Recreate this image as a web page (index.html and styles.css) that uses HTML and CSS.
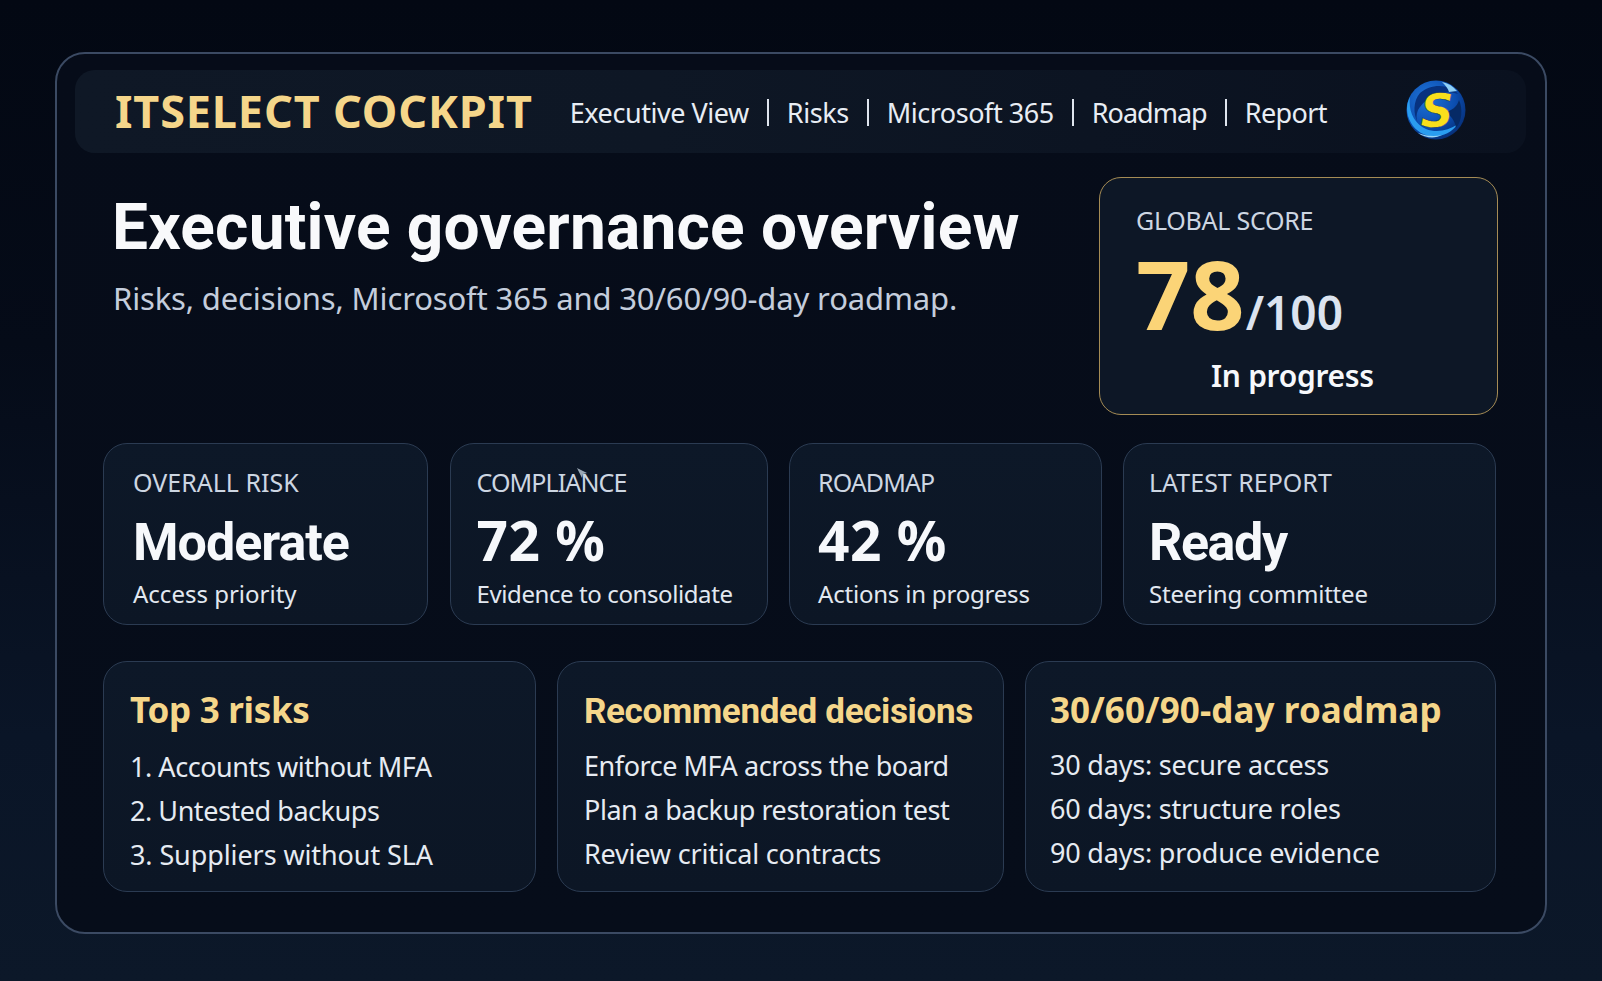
FILE: index.html
```html
<!DOCTYPE html>
<html lang="en">
<head>
<meta charset="utf-8">
<title>ITSELECT Cockpit</title>
<link rel="stylesheet" href="styles.css">
</head>
<body>
<main class="panel">
  <header class="topbar">
    <div class="brand">ITSELECT COCKPIT</div>
    <nav class="nav">
      <span>Executive View</span><i class="sep"></i>
      <span>Risks</span><i class="sep"></i>
      <span>Microsoft 365</span><i class="sep"></i>
      <span class="snug">Roadmap</span><i class="sep"></i>
      <span class="snug-less">Report</span>
    </nav>
    <svg class="logo" viewBox="0 0 60 60" aria-label="S logo">
      <defs>
        <radialGradient id="ball" cx="35%" cy="30%" r="80%">
          <stop offset="0" stop-color="#1f74d8"/>
          <stop offset=".6" stop-color="#0b4db0"/>
          <stop offset="1" stop-color="#062a6e"/>
        </radialGradient>
      </defs>
      <circle cx="30" cy="30" r="29.5" fill="url(#ball)"/>
      <path d="M4 17C2 30 8 44 20 49c10 4 22 2 32-5-9 12-24 16-37 9C3 46-3 30 4 17Z" fill="#2a9df0"/>
      <path d="M14 13c8-7 20-9 30-5 3 1 6 3 8 6-8-3-15-2-22 1-8 3-14 8-18 15-2 5-2 9 0 13-5-9-5-22 2-30Z" fill="#07327f"/>
      <path d="M36 2c6 1 11 4 15 9l-8 1c-1-4-4-7-7-10Z" fill="#8fd0f5"/>
      <path d="M38 32c8-1 13-5 15-12 4 9 3 21-3 28-1-7-5-13-12-16Z" fill="#062a66"/>
      <path d="M12 53c8 3 16 4 24 2-7 4-17 3-24-2Z" fill="#9bd6f7"/>
      <text class="logo-s" x="31" y="47">S</text>
    </svg>
  </header>

  <section class="hero">
    <div class="hero-text">
      <h1>Executive governance overview</h1>
      <p>Risks, decisions, Microsoft 365 and 30/60/90-day roadmap.</p>
    </div>
    <aside class="score">
      <div class="label global">GLOBAL SCORE</div>
      <div class="score-value"><b>78</b><span>/100</span></div>
      <div class="score-state">In progress</div>
    </aside>
  </section>

  <section class="kpis">
    <article class="card kpi">
      <div class="label">OVERALL RISK</div>
      <div class="big word">Moderate</div>
      <div class="note">Access priority</div>
    </article>
    <article class="card kpi">
      <div class="label tight">COMPLIANCE</div>
      <div class="big num">72 %</div>
      <div class="note">Evidence to consolidate</div>
      <svg class="speck" viewBox="0 0 12 12"><path d="M1 1l10 5-4 1-1 4Z" fill="#9aa7b5"/></svg>
    </article>
    <article class="card kpi">
      <div class="label tight">ROADMAP</div>
      <div class="big num">42 %</div>
      <div class="note">Actions in progress</div>
    </article>
    <article class="card kpi">
      <div class="label">LATEST REPORT</div>
      <div class="big word">Ready</div>
      <div class="note">Steering committee</div>
    </article>
  </section>

  <section class="lists">
    <article class="card list">
      <h2>Top 3 risks</h2>
      <ul><li>1. Accounts without MFA</li><li>2. Untested backups</li><li class="looser">3. Suppliers without SLA</li></ul>
    </article>
    <article class="card list">
      <h2 class="narrow">Recommended decisions</h2>
      <ul><li>Enforce MFA across the board</li><li>Plan a backup restoration test</li><li class="loose">Review critical contracts</li></ul>
    </article>
    <article class="card list">
      <h2 class="wide">30/60/90-day roadmap</h2>
      <ul><li class="loose">30 days: secure access</li><li class="loose">60 days: structure roles</li><li class="loose">90 days: produce evidence</li></ul>
    </article>
  </section>
</main>
</body>
</html>
```
FILE: styles.css
```css
* { box-sizing: border-box; }
html, body { height: 100%; }
body {
  margin: 0;
  height: 981px;
  overflow: hidden;
  padding: 52px 55px 47px 55px;
  font-family: "Noto Sans", sans-serif;
  color: #f4f6fa;
  background: linear-gradient(180deg, #030813 0%, #050b18 35%, #0a1527 75%, #0c1829 100%);
}
.panel {
  height: 882px;
  border: 2px solid #3b4a63;
  border-radius: 30px;
  background: linear-gradient(180deg, #060c19 0%, #060d1a 100%);
  padding: 16px 19px 0 18px;
}
.topbar {
  height: 83px;
  display: flex;
  align-items: center;
  padding-left: 40px;
  border-radius: 20px;
  background: linear-gradient(90deg, #0f1826 0%, #0e1725 40%, #0a111f 100%);
}
.brand {
  font-size: 45px;
  font-weight: 700;
  letter-spacing: .85px;
  line-height: 1;
  margin-top: -3px;
  color: #f5d68a;
  white-space: nowrap;
}
.nav {
  display: flex;
  align-items: center;
  gap: 18px;
  margin-left: 37px;
  margin-top: 2px;
  font-size: 27px;
  letter-spacing: -.45px;
  color: #e8edf4;
  white-space: nowrap;
}
.snug { letter-spacing: -1px; }
.snug-less { letter-spacing: -.6px; }
.sep { width: 2px; height: 27px; background: #dfe5ee; }
.logo { width: 60px; height: 60px; margin-left: 79px; margin-top: -4px; flex: none; }
.logo-s {
  font-family: "DejaVu Sans", sans-serif;
  font-size: 46px;
  font-weight: 700;
  font-style: italic;
  text-anchor: middle;
  fill: #f9df1c;
  stroke: #04225c;
  stroke-width: .4px;
}
.hero {
  display: flex;
  justify-content: space-between;
  height: 238px;
  margin-top: 24px;
  padding-left: 37px;
  padding-right: 28px;
}
.hero-text { min-width: 0; }
h1 {
  margin: 9px 0 0;
  font-family: Roboto, "Noto Sans", sans-serif;
  font-size: 64px;
  font-weight: 700;
  letter-spacing: .2px;
  line-height: 84px;
  color: #f8f9fb;
  white-space: nowrap;
}
.hero-text p {
  margin: 7px 0 0 1px;
  font-size: 31px;
  letter-spacing: -.15px;
  line-height: 42px;
  color: #c4cddc;
}
.score {
  flex: none;
  width: 399px;
  border: 1px solid #a58c55;
  border-radius: 22px;
  background: #0d1726;
  padding: 26px 0 0 36px;
}
.label { font-size: 25px; line-height: 32px; color: #cdd6e2; white-space: nowrap; }
.global { letter-spacing: -.25px; }
.tight { letter-spacing: -.9px; }
.score-value { display: flex; align-items: baseline; line-height: 92px; margin-top: 11px; }
.score-value b { font-size: 95px; font-weight: 700; color: #fbd477; }
.score-value span { font-size: 46px; font-weight: 600; color: #dbe3ef; margin-left: 1px; }
.score-state { font-size: 30px; font-weight: 600; letter-spacing: -.3px; color: #f6f8fb; margin: -2px 0 0 75px; line-height: 40px; }
.kpis {
  display: grid;
  grid-template-columns: 325px 318px 312.5px 372.5px;
  gap: 21.5px;
  height: 182px;
  margin-top: 28px;
  padding-left: 28px;
}
.card {
  position: relative;
  border: 1px solid #2b3b52;
  border-radius: 24px;
  background: linear-gradient(180deg, #0d1828 0%, #0c1625 100%);
}
.kpi { padding: 22px 0 0 29px; }
.kpi:nth-child(2) { padding-left: 26px; }
.kpi:nth-child(3) { padding-left: 28px; }
.kpi:nth-child(4) { padding-left: 25px; }
.big { font-size: 55px; font-weight: 700; line-height: 62px; margin-top: 11px; color: #f6f8fb; white-space: nowrap; }
.word { font-family: Roboto, "Noto Sans", sans-serif; font-size: 52px; letter-spacing: -1px; margin-top: 14px; margin-bottom: -3px; }
.kpi:nth-child(4) .word { letter-spacing: -1.4px; }
.num { letter-spacing: .5px; }
.note { font-size: 24px; line-height: 32px; margin-top: 7px; letter-spacing: -.2px; color: #e2e8f0; white-space: nowrap; }
.kpi:nth-child(1) .note { letter-spacing: 0; }
.kpi:nth-child(2) .note { letter-spacing: -.4px; }
.speck { position: absolute; left: 125px; top: 23px; width: 12px; height: 12px; }
.lists {
  display: grid;
  grid-template-columns: 433px 447px 471px;
  gap: 21px;
  height: 231px;
  margin-top: 36px;
  padding-left: 28px;
}
.list { padding: 24px 0 0 26px; }
.list:nth-child(3) { padding-left: 24px; }
h2 { margin: 0; font-size: 35px; font-weight: 700; letter-spacing: -.3px; line-height: 48px; color: #f5d68a; white-space: nowrap; }
.narrow { font-family: Roboto, "Noto Sans", sans-serif; letter-spacing: -.35px; padding-top: 2px; margin-bottom: -2px; }
.wide { letter-spacing: .1px; }
ul { list-style: none; margin: 11px 0 0; padding: 0; }
.list:nth-child(2) ul { margin-top: 10px; }
.list:nth-child(3) ul { margin-top: 9px; }
li { font-size: 27px; letter-spacing: -.45px; line-height: 44px; color: #e6ebf2; white-space: nowrap; }
li.loose { letter-spacing: -.2px; }
li.looser { letter-spacing: -.1px; }
```
